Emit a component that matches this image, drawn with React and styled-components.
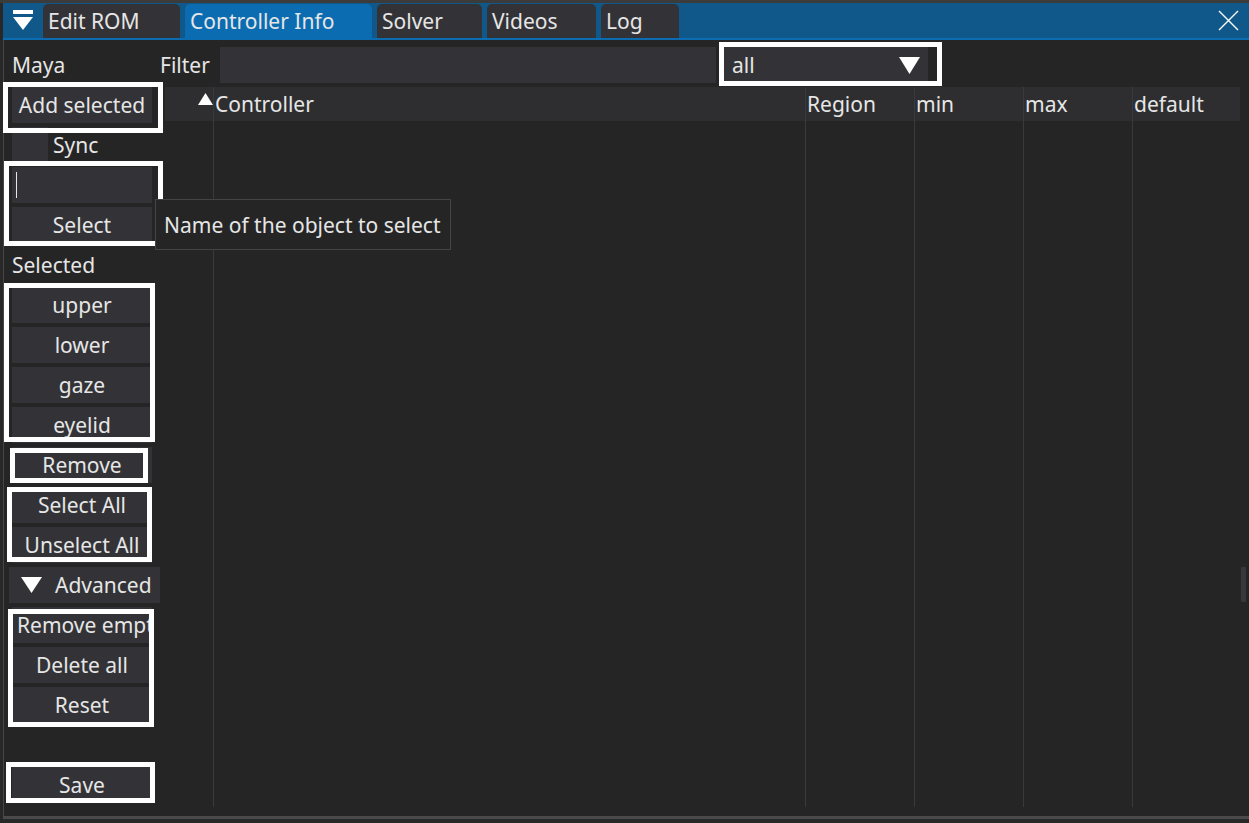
import React from 'react';
import styled, { createGlobalStyle } from 'styled-components';

const GlobalStyle = createGlobalStyle`
    html, body {
        margin: 0;
        padding: 0;
        background: #282828;
    }
    body {
        font-family: "Noto Sans", "Open Sans", sans-serif;
        font-size: 21px;
        color: #e6e6e6;
    }
`;

const Page = styled.div`
    width: 1249px;
    height: 823px;
    box-sizing: border-box;
    padding-left: 3px;
    background: #282828;
    border-top: 3px solid #3b3b3b;
    overflow: hidden;
`;

const Window = styled.div`
    position: relative;
    height: 816px;
    display: flex;
    flex-direction: column;
    box-sizing: border-box;
    background: #252525;
    border-bottom: 3px solid #4a4a4a;
`;

const TitleBar = styled.div`
    height: 35px;
    flex: none;
    display: flex;
    align-items: flex-end;
    gap: 5px;
    padding-left: 10px;
    background: #10578a;
    border-bottom: 2px solid #0b6cb2;
`;

const MenuIcon = styled.svg`
    align-self: center;
    margin-right: 5px;
`;

const Tab = styled.div`
    width: ${p => p.$w}px;
    height: 34px;
    line-height: 34px;
    box-sizing: border-box;
    padding-left: 5px;
    border-radius: 5px 5px 0 0;
    background: ${p => (p.$active ? '#0b6cb2' : '#333337')};
    white-space: nowrap;
`;

const CloseIcon = styled.svg`
    align-self: center;
    margin-left: auto;
    margin-right: 10px;
`;

const Body = styled.div`
    flex: 1;
    display: flex;
    padding-top: 7px;
    border-left: 1px solid #454545;
`;

const LeftColumn = styled.div`
    width: 156px;
    flex: none;
    box-sizing: border-box;
    padding-left: 8px;
    display: flex;
    flex-direction: column;
    align-items: flex-start;
    gap: 4px;
`;

const Label = styled.div`
    height: 36px;
    line-height: 36px;
    white-space: nowrap;
`;

const Button = styled.div`
    width: ${p => p.$w || 140}px;
    height: 36px;
    flex: none;
    box-sizing: border-box;
    display: flex;
    align-items: center;
    justify-content: ${p => (p.$clip ? 'flex-start' : 'center')};
    padding-left: ${p => (p.$clip ? 5 : 0)}px;
    overflow: hidden;
    white-space: nowrap;
    background: #333337;
`;

const Group = styled.div`
    display: flex;
    flex-direction: column;
    gap: 4px;
`;

const Highlight = styled.div`
    position: relative;
    &::after {
        content: '';
        position: absolute;
        top: ${p => p.$t}px;
        left: ${p => p.$l}px;
        right: ${p => p.$r}px;
        bottom: ${p => p.$b}px;
        border: 5px solid #ffffff;
        pointer-events: none;
        z-index: 2;
    }
`;

const CheckRow = styled.div`
    height: 36px;
    display: flex;
    align-items: center;
    gap: 5px;
`;

const CheckBox = styled.div`
    width: 36px;
    height: 36px;
    background: #333337;
`;

const TextInput = styled.div`
    width: 140px;
    height: 36px;
    box-sizing: border-box;
    padding: 5px 4px;
    background: #333337;
`;

const Caret = styled.div`
    width: 1px;
    height: 26px;
    background: #e6e6e6;
`;

const Collapser = styled.div`
    width: 151px;
    height: 36px;
    margin-left: -3px;
    display: flex;
    align-items: center;
    gap: 13px;
    padding-left: 12px;
    box-sizing: border-box;
    background: #333337;
    white-space: nowrap;
`;

const Spacer = styled.div`
    height: 36px;
`;

const RightArea = styled.div`
    flex: 1;
    display: flex;
    flex-direction: column;
    gap: 4px;
`;

const FilterRow = styled.div`
    height: 36px;
    display: flex;
    align-items: center;
`;

const FilterLabel = styled.div`
    width: 60px;
`;

const FilterInput = styled.div`
    width: 496px;
    height: 36px;
    margin-right: 4px;
    background: #333337;
`;

const Combo = styled.div`
    width: 208px;
    height: 36px;
    box-sizing: border-box;
    display: flex;
    align-items: center;
    justify-content: space-between;
    padding: 0 8px 0 12px;
    background: #333337;
`;

const TableWrap = styled.div`
    flex: none;
    display: flex;
    margin-left: 5px;
    height: 720px;
`;

const Table = styled.div`
    width: 1075px;
    display: grid;
    grid-template-columns: 48px 592px 109px 109px 109px 1fr;
    grid-template-rows: 34px 1fr;
`;

const HeadCell = styled.div`
    display: flex;
    align-items: center;
    justify-content: ${p => (p.$right ? 'flex-end' : 'flex-start')};
    padding-left: 1px;
    background: #2e2e30;
    border-left: ${p => (p.$first ? 'none' : '1px solid #3a3a3c')};
    white-space: nowrap;
`;

const BodyCell = styled.div`
    border-left: ${p => (p.$first ? 'none' : '1px solid #3a3a3c')};
`;

const ScrollTrack = styled.div`
    width: 5px;
    margin-left: 1px;
`;

const ScrollThumb = styled.div`
    width: 5px;
    height: 35px;
    background: #38383c;
    border-radius: 1px;
`;

const Tooltip = styled.div`
    position: absolute;
    left: 152px;
    top: 196px;
    width: 296px;
    height: 51px;
    box-sizing: border-box;
    padding-left: 8px;
    display: flex;
    align-items: center;
    background: #252525;
    border: 1px solid #444446;
    white-space: nowrap;
    z-index: 3;
`;

function DownTriangle({ w, h }) {
    return <svg width={w} height={h} viewBox={`0 0 ${w} ${h}`}>
        <polygon points={`0,0 ${w},0 ${w / 2},${h}`} fill="#ffffff" />
    </svg>;
}

const tabs = [
    { name: 'Edit ROM', w: 137 },
    { name: 'Controller Info', w: 187, active: true },
    { name: 'Solver', w: 105 },
    { name: 'Videos', w: 109 },
    { name: 'Log', w: 78 },
];

const columns = ['', 'Controller', 'Region', 'min', 'max', 'default'];

export default function App() {
    return <Page>
        <GlobalStyle />
        <Window>
            <TitleBar>
                <MenuIcon width="20" height="21" viewBox="0 0 20 21">
                    <rect x="0" y="0" width="20" height="4" fill="#ffffff" />
                    <polygon points="0,7 20,7 10,20" fill="#ffffff" />
                </MenuIcon>
                {tabs.map(t => (
                    <Tab key={t.name} $w={t.w} $active={t.active}>{t.name}</Tab>
                ))}
                <CloseIcon width="21" height="21" viewBox="0 0 21 21">
                    <path d="M1 1 L20 20 M20 1 L1 20" stroke="#ffffff" strokeWidth="1.4" />
                </CloseIcon>
            </TitleBar>
            <Body>
                <LeftColumn>
                    <Label>Maya</Label>
                    <Highlight $t={-5} $l={-9} $r={-11} $b={-10}>
                        <Button>Add selected</Button>
                    </Highlight>
                    <CheckRow>
                        <CheckBox />
                        <span>Sync</span>
                    </CheckRow>
                    <Highlight $t={-6} $l={-8} $r={-11} $b={-3}>
                        <Group>
                            <TextInput><Caret /></TextInput>
                            <Button>Select</Button>
                        </Group>
                    </Highlight>
                    <Label>Selected</Label>
                    <Highlight $t={-4} $l={-8} $r={-3} $b={1}>
                        <Group>
                            {['upper', 'lower', 'gaze', 'eyelid'].map(n => (
                                <Button key={n} $w={140}>{n}</Button>
                            ))}
                        </Group>
                    </Highlight>
                    <Highlight $t={1} $l={-2} $r={4} $b={0}>
                        <Button>Remove</Button>
                    </Highlight>
                    <Highlight $t={0} $l={-5} $r={0} $b={1}>
                        <Group>
                            <Button>Select All</Button>
                            <Button>Unselect All</Button>
                        </Group>
                    </Highlight>
                    <Collapser>
                        <DownTriangle w={21} h={16} />
                        <span>Advanced</span>
                    </Collapser>
                    <Highlight $t={2} $l={-4} $r={-2} $b={-4}>
                        <Group>
                            <Button $clip>Remove empty</Button>
                            <Button>Delete all</Button>
                            <Button>Reset</Button>
                        </Group>
                    </Highlight>
                    <Spacer />
                    <Highlight $t={-5} $l={-6} $r={-3} $b={0}>
                        <Button>Save</Button>
                    </Highlight>
                </LeftColumn>
                <RightArea>
                    <FilterRow>
                        <FilterLabel>Filter</FilterLabel>
                        <FilterInput />
                        <Highlight $t={-5} $l={-1} $r={-14} $b={-3}>
                            <Combo>
                                <span>all</span>
                                <DownTriangle w={21} h={17} />
                            </Combo>
                        </Highlight>
                    </FilterRow>
                    <TableWrap>
                        <Table>
                            {columns.map((c, i) => (
                                <HeadCell key={'h' + i} $first={i === 0} $right={i === 0}>
                                    {i === 0
                                        ? <svg width="15" height="12" viewBox="0 0 15 12" style={{ marginBottom: 11 }}>
                                            <polygon points="0,12 15,12 7.5,0" fill="#ffffff" />
                                        </svg>
                                        : c}
                                </HeadCell>
                            ))}
                            {columns.map((c, i) => (
                                <BodyCell key={'b' + i} $first={i === 0} />
                            ))}
                        </Table>
                        <ScrollTrack>
                            <ScrollThumb style={{ marginTop: 480 }} />
                        </ScrollTrack>
                    </TableWrap>
                </RightArea>
            </Body>
            <Tooltip>Name of the object to select</Tooltip>
        </Window>
    </Page>;
}
